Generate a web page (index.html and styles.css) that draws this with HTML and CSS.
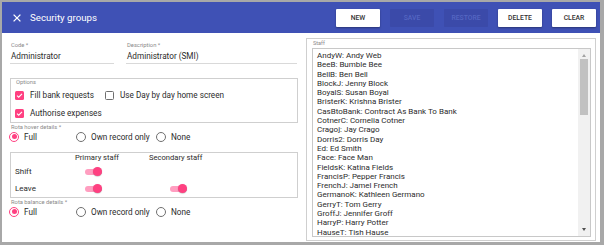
FILE: index.html
```html
<!DOCTYPE html>
<html lang="en">
<head>
<meta charset="utf-8">
<title>Security groups</title>
<link rel="stylesheet" href="styles.css">
</head>
<body>
<div class="window">
  <header class="bar">
    <span class="close" aria-label="Close">
      <svg width="8" height="8" viewBox="0 0 8 8"><path d="M0.6 0.6L7.4 7.4M7.4 0.6L0.6 7.4" stroke="#fff" stroke-width="1.3" fill="none"/></svg>
    </span>
    <h1 class="title">Security groups</h1>
    <div class="actions">
      <button class="btn">New</button>
      <button class="btn disabled">Save</button>
      <button class="btn disabled">Restore</button>
      <button class="btn">Delete</button>
      <button class="btn">Clear</button>
    </div>
  </header>
  <main class="body">
    <section class="left">
      <div class="fields">
        <div class="field code">
          <div class="flabel">Code *</div>
          <div class="fvalue">Administrator</div>
        </div>
        <div class="field desc">
          <div class="flabel">Description *</div>
          <div class="fvalue">Administrator (SMI)</div>
        </div>
      </div>

      <div class="group options">
        <div class="glabel">Options</div>
        <div class="crow">
          <span class="check on"><svg width="9" height="9" viewBox="0 0 9 9"><path d="M2 4.6L3.7 6.2L7 2.8" stroke="#fff" stroke-width="1.1" fill="none"/></svg></span>
          <span class="ctext first">Fill bank requests</span>
          <span class="check"></span>
          <span class="ctext">Use Day by day home screen</span>
        </div>
        <div class="crow">
          <span class="check on"><svg width="9" height="9" viewBox="0 0 9 9"><path d="M2 4.6L3.7 6.2L7 2.8" stroke="#fff" stroke-width="1.1" fill="none"/></svg></span>
          <span class="ctext">Authorise expenses</span>
        </div>
      </div>

      <div class="slabel">Rota hover details *</div>
      <div class="radios">
        <span class="ritem w-full"><span class="radio on"></span>Full</span>
        <span class="ritem w-own"><span class="radio"></span>Own record only</span>
        <span class="ritem"><span class="radio"></span>None</span>
      </div>

      <div class="group toggles">
        <div class="tgrid">
          <span></span>
          <span class="thead">Primary staff</span>
          <span class="thead">Secondary staff</span>

          <span class="tlabel">Shift</span>
          <span class="tcell"><span class="toggle"></span></span>
          <span class="tcell"></span>

          <span class="tlabel">Leave</span>
          <span class="tcell"><span class="toggle"></span></span>
          <span class="tcell sec"><span class="toggle"></span></span>
        </div>
      </div>

      <div class="slabel">Rota balance details *</div>
      <div class="radios">
        <span class="ritem w-full"><span class="radio on"></span>Full</span>
        <span class="ritem w-own"><span class="radio"></span>Own record only</span>
        <span class="ritem"><span class="radio"></span>None</span>
      </div>
    </section>

    <section class="right">
      <div class="staffbox">
        <div class="stlabel">Staff</div>
        <div class="listbox">
          <ul class="list">
            <li>AndyW: Andy Web</li>
            <li>BeeB: Bumble Bee</li>
            <li>BellB: Ben Bell</li>
            <li>BlockJ: Jenny Block</li>
            <li>BoyalS: Susan Boyal</li>
            <li>BristerK: Krishna Brister</li>
            <li>CasBtoBank: Contract As Bank To Bank</li>
            <li>CotnerC: Cornelia Cotner</li>
            <li>Cragoj: Jay Crago</li>
            <li>Dorris2: Dorris Day</li>
            <li>Ed: Ed Smith</li>
            <li>Face: Face Man</li>
            <li>FieldsK: Katina Fields</li>
            <li>FrancisP: Pepper Francis</li>
            <li>FrenchJ: Jamel French</li>
            <li>GermanoK: Kathleen Germano</li>
            <li>GerryT: Tom Gerry</li>
            <li>GroffJ: Jennifer Groff</li>
            <li>HarryP: Harry Potter</li>
            <li>HauseT: Tish Hause</li>
          </ul>
          <div class="scrollbar">
            <span class="arrow up"></span>
            <div class="track"><div class="thumb"></div></div>
            <span class="arrow down"></span>
          </div>
        </div>
      </div>
    </section>
  </main>
</div>
</body>
</html>
```

FILE: styles.css
```css
* { box-sizing: border-box; }
html, body { margin: 0; padding: 0; background: #fff; }
body { font-family: Roboto, "Noto Sans", Arial, sans-serif; color: #2b2b2b; }

.window {
  width: 604px;
  height: 245px;
  border-style: solid;
  border-color: #a8a8a8;
  border-width: 2px 4px 3px 2px;
  display: flex;
  flex-direction: column;
  overflow: hidden;
}

.bar {
  height: 31px;
  flex: none;
  background: #3f51b5;
  display: flex;
  align-items: center;
  padding: 0 4px 0 11px;
}
.close { width: 8px; height: 8px; display: flex; margin-top: 1px; }
.title {
  margin: 0 0 0 9px;
  font-size: 9.7px;
  font-weight: 400;
  color: #fff;
  flex: 1;
}
.actions { display: flex; gap: 10px; }
.btn {
  width: 44px;
  height: 18px;
  border: 0;
  border-radius: 1px;
  background: #fff;
  color: #333;
  font-family: Roboto, Arial, sans-serif;
  font-size: 6.8px;
  font-weight: 500;
  text-transform: uppercase;
  padding: 0;
  box-shadow: 0 1px 2px rgba(0,0,0,0.35);
}
.btn.disabled {
  background: #3b4aa9;
  color: #5566c2;
  box-shadow: none;
}

.body {
  flex: 1;
  display: flex;
  gap: 8px;
  padding: 0 4px 0 8px;
}

.left { width: 288px; flex: none; display: flex; flex-direction: column; }

.fields { display: flex; gap: 12px; padding-top: 8px; }
.field { border-bottom: 1px solid #d9d9d9; }
.field.code { width: 104px; }
.field.desc { width: 171px; }
.flabel { font-size: 5.8px; line-height: 8px; color: #8a8a8a; padding-left: 1px; }
.fvalue { font-size: 8.2px; line-height: 14px; color: #2b2b2b; padding-left: 1px; }

.group { border: 1px solid #cfcfcf; }
.options { margin-top: 14px; padding: 0 0 0 4px; }
.glabel { font-size: 5.8px; line-height: 7px; color: #8a8a8a; padding-left: 1px; }
.crow { height: 18px; display: flex; align-items: center; }
.check {
  width: 9px;
  height: 9px;
  border: 1.2px solid #6f6f6f;
  border-radius: 1.5px;
  flex: none;
  display: flex;
}
.check.on { background: #ff4081; border: 0; }
.ctext { font-size: 8.2px; margin-left: 6px; color: #2b2b2b; }
.ctext.first { margin-right: 11px; }

.slabel { font-size: 5.8px; line-height: 8px; color: #8a8a8a; padding-left: 1px; }
.radios { height: 11px; display: flex; align-items: center; }
.ritem { display: flex; align-items: center; font-size: 8.2px; color: #2b2b2b; }
.ritem.w-full { width: 67px; margin-left: -1px; }
.ritem.w-own { width: 80px; }
.radio {
  width: 10px;
  height: 10px;
  border: 1px solid #707070;
  border-radius: 50%;
  margin-right: 5px;
  flex: none;
  display: flex;
  align-items: center;
  justify-content: center;
}
.radio.on { border-color: #ff4081; }
.radio.on::after {
  content: "";
  width: 5px;
  height: 5px;
  border-radius: 50%;
  background: #ff4081;
}

.toggles { margin-top: 10px; }
.tgrid {
  display: grid;
  grid-template-columns: 64px 74px auto;
  grid-template-rows: 10px 17px 17px;
  align-items: center;
}
.thead { font-size: 7.6px; color: #2b2b2b; line-height: 10px; }
.tlabel { font-size: 8px; color: #2b2b2b; padding-left: 4px; }
.tcell { display: flex; padding-left: 10px; }
.tcell.sec { padding-left: 21px; }
.toggle {
  position: relative;
  width: 17px;
  height: 6px;
  border-radius: 3px;
  background: #ff9ec0;
}
.toggle::after {
  content: "";
  position: absolute;
  right: 0;
  top: -1.5px;
  width: 9px;
  height: 9px;
  border-radius: 50%;
  background: #ff4081;
  box-shadow: 0 0.5px 1px rgba(0,0,0,0.3);
}

.right { width: 290px; flex: none; }
.staffbox {
  margin-top: 5px;
  height: 203px;
  border: 1px solid #cfcfcf;
  padding: 0 4px 3px 5px;
  display: flex;
  flex-direction: column;
}
.stlabel { font-size: 5.5px; line-height: 6px; color: #8a8a8a; padding-left: 1px; margin-top: 1px; }
.listbox {
  margin-top: 2px;
  flex: 1;
  border: 1px solid #c8c8c8;
  display: flex;
  overflow: hidden;
}
.list {
  list-style: none;
  margin: 0;
  padding: 2px 0 0 4px;
  flex: 1;
  overflow: hidden;
}
.list li { font-size: 8px; line-height: 9.3px; color: #2b2b2b; white-space: nowrap; }

.scrollbar {
  width: 12px;
  flex: none;
  background: #f1f1f1;
  display: flex;
  flex-direction: column;
  align-items: center;
}
.arrow {
  width: 0; height: 0;
  border-left: 2.5px solid transparent;
  border-right: 2.5px solid transparent;
  flex: none;
}
.arrow.up { border-bottom: 3px solid #a3a3a3; margin-top: 5px; }
.arrow.down { border-top: 3px solid #505050; margin-bottom: 5px; }
.track { flex: 1; width: 100%; padding: 2px 2px 0; }
.thumb { height: 56px; background: #c1c1c1; }
```
